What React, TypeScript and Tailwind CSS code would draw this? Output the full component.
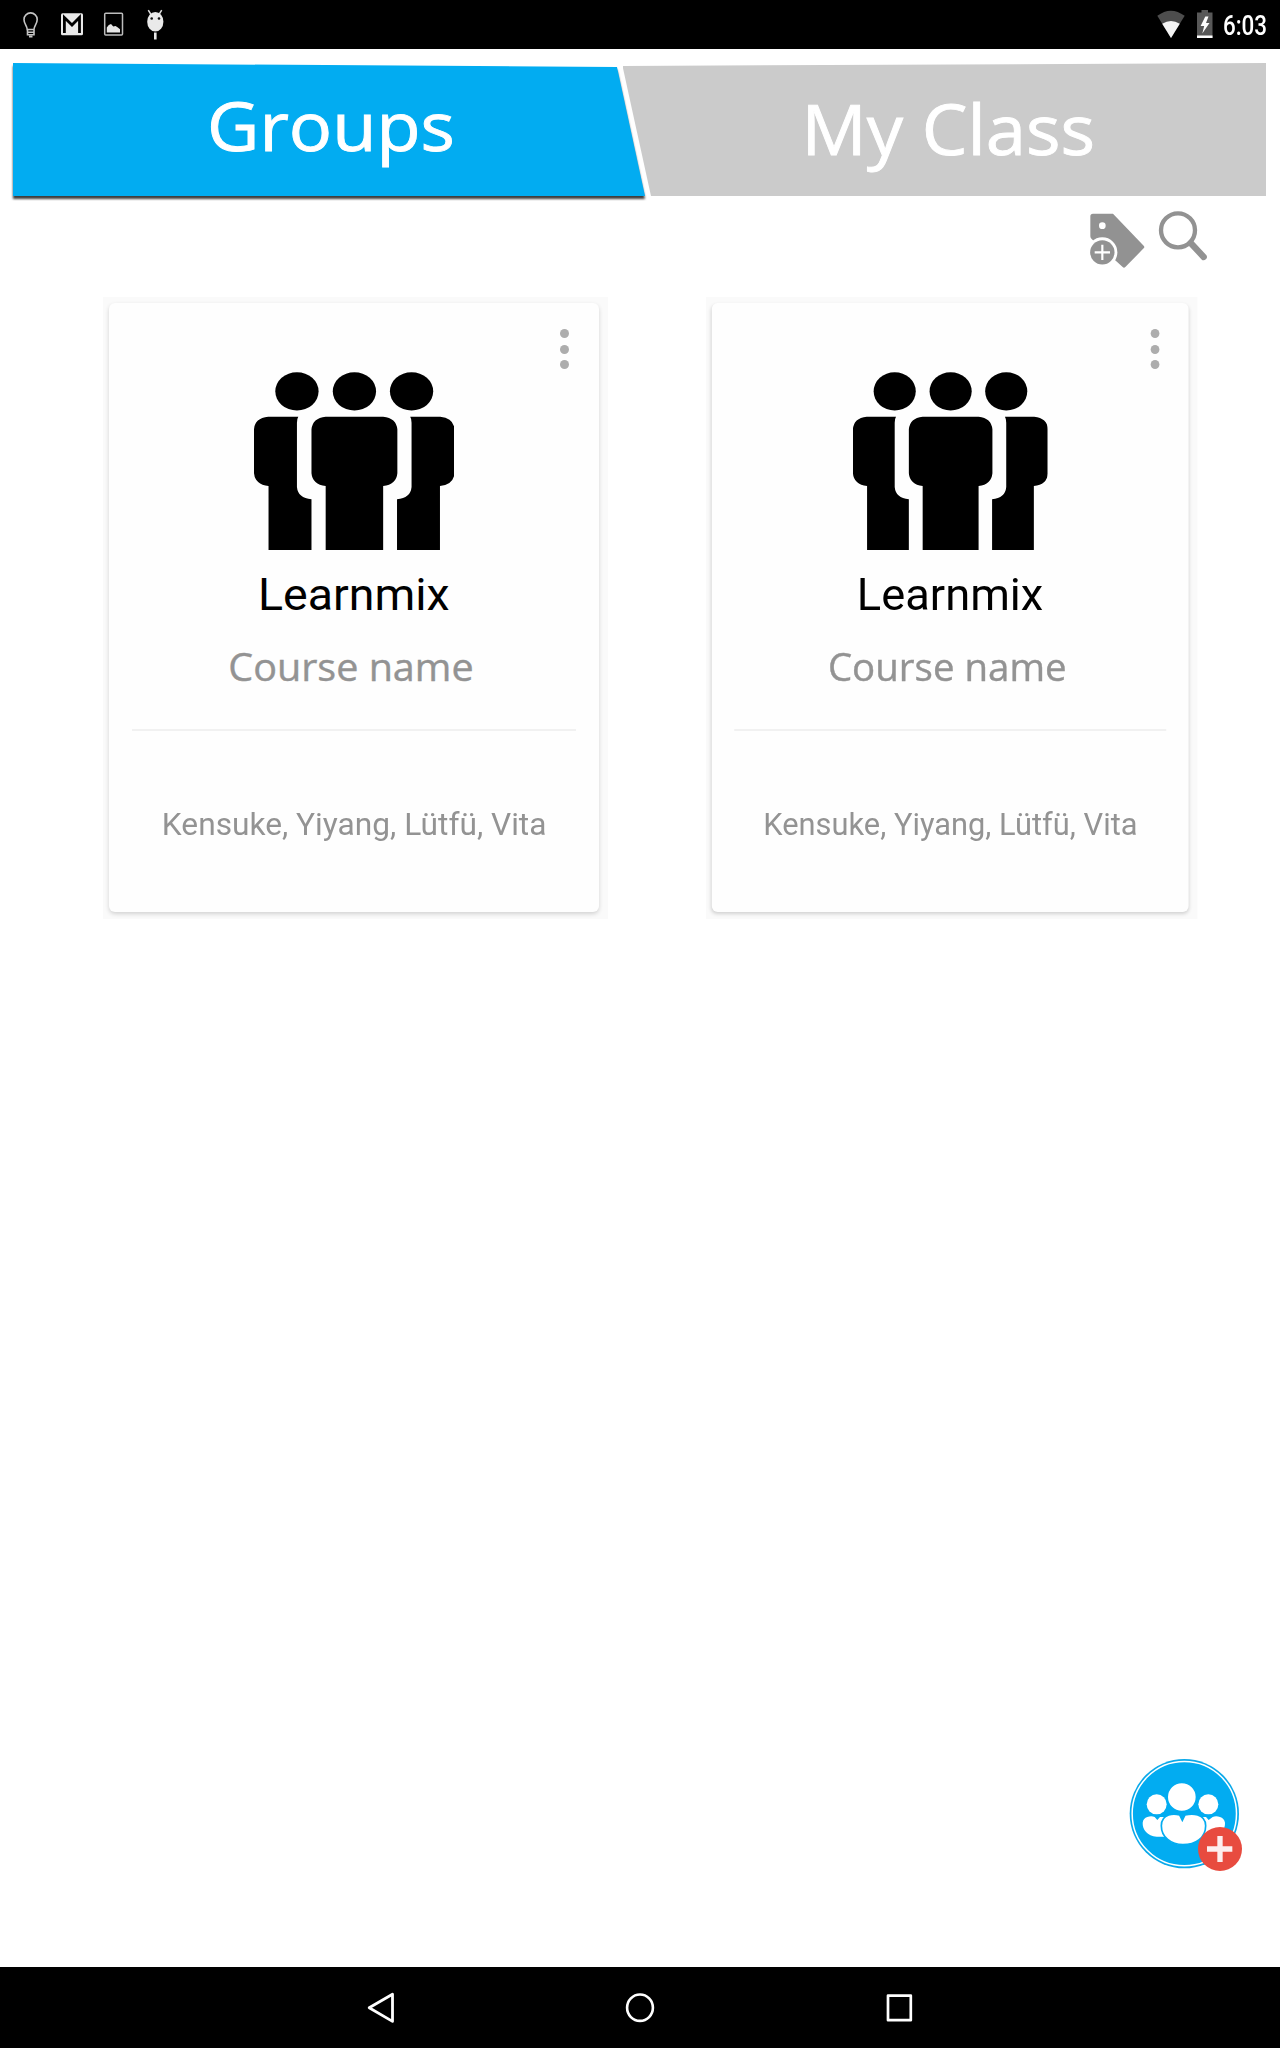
import React from "react";

function StatusBar() {
  return (
    <div className="flex h-[48.5px] shrink-0 items-start justify-between bg-black">
      <div className="flex pt-[8px] pl-[20px]">
        {/* Light bulb */}
        <svg width="21" height="34" viewBox="0 0 21 34" fill="none" stroke="#c4c4c4" strokeWidth="1.6">
          <path d="M7.2 21.5C7 17.5 4 16 4 11.5a6.6 6.6 0 0 1 13.2 0c0 4.500-3 6-3.200 10Z" />
          <path d="M7.500 22v4.800h6.500V22M7.500 24.200h6.500" />
          <path d="M9 28.500h3.500" strokeWidth="2" />
        </svg>
        {/* Mail */}
        <svg className="ml-[19px]" width="24" height="34" viewBox="0 0 24 34">
          <rect x="1" y="5.200" width="22" height="22" rx="1.500" fill="#e9e9e9" />
          <path d="M4.400 25V9.500L12 17l7.500-7.500V25" fill="none" stroke="#000" strokeWidth="2.800" />
        </svg>
        {/* Picture */}
        <svg className="ml-[19px]" width="21" height="34" viewBox="0 0 21 34">
          <rect x="1.700" y="5.200" width="17.800" height="21.800" rx="1" fill="none" stroke="#bdbdbd" strokeWidth="1.500" />
          <path d="M3.800 24.500v-5l2-2.500 2.200-1 2.300 2.600L12.500 18l2 1.200 2.500 2v3.300Z" fill="#e6e6e6" />
        </svg>
        {/* Android head */}
        <svg className="ml-[21px]" width="20" height="34" viewBox="0 0 20 34">
          <path d="M3.300 2.200 6 6.500M16.700 2.200 14 6.500" stroke="#ddd" strokeWidth="1.500" />
          <ellipse cx="10.300" cy="13.800" rx="8.100" ry="9.800" fill="#e9e9e9" />
          <circle cx="6.700" cy="10.500" r="1.300" fill="#111" />
          <circle cx="14" cy="10.500" r="1.300" fill="#111" />
          <path d="M10.300 24.500v7" stroke="#e9e9e9" strokeWidth="2.600" />
        </svg>
      </div>
      <div className="flex pt-[9px] pr-[8px]">
        <svg width="28" height="30" viewBox="0 0 28 30">
          <path d="M.300 6.800Q13.700-3.500 27.700 6.800L14 29Z" fill="#4d4d4d" />
          <path d="M5.200 14.800Q14 9 22.800 14.800L14 29Z" fill="#f4f4f4" />
        </svg>
        <svg className="ml-[12px]" width="16" height="30" viewBox="0 0 16 30">
          <path d="M0 3.500h4.500V1h6.500v2.500h4.500V29H0Z" fill="#585858" />
          <path d="M0 26.500h15.500V29H0Z" fill="#fff" />
          <path d="M8.300 7.500 3.600 17h3.600L5.300 24.500 12.500 14H9l2.500-6.500Z" fill="#fff" />
        </svg>
        <div className="ml-[5px] w-[54px] origin-center scale-x-[0.830] text-center font-[Roboto,sans-serif] text-[27px] leading-[34px] font-medium text-white">
          6:03
        </div>
      </div>
    </div>
  );
}

function Tabs() {
  return (
    <div className="flex shrink-0 pt-[14.500px] pl-[13px] font-['Open_Sans',sans-serif] text-white [-webkit-text-stroke:0.9px_white]">
      <div className="z-10 w-[632px] [filter:drop-shadow(0_3px_1px_#3f3f3f)]">
        <div className="h-[133px] bg-[#02acf1] text-center text-[68px] leading-[124px] [clip-path:polygon(0_0,604px_4px,632px_133px,0_133px)]">
          <span className="inline-block translate-x-[2px] scale-x-[1.060]">Groups</span>
        </div>
      </div>
      <div className="ml-[-22.500px] h-[133px] w-[643.500px] bg-[#cbcbcb] text-center text-[70px] leading-[131px] [clip-path:polygon(0_3px,100%_0,100%_100%,28.500px_100%)]">
        <span className="inline-block translate-x-[4.500px] scale-x-[1.035]">My Class</span>
      </div>
    </div>
  );
}

function Toolbar() {
  return (
    <div className="flex h-[101px] shrink-0 justify-end pt-[17px] pr-[72px]">
      {/* Tag with plus badge */}
      <svg width="56" height="56" viewBox="0 0 168 168">
        <path d="M4 10q0-8 8-8h60l92 96q4 4 0 8l-55 56q-4 4-8 0L8 78q-4-3-4-8Z" fill="#929292" />
        <circle cx="40" cy="38" r="10" fill="#fff" />
        <circle cx="40" cy="118" r="45" fill="#fff" />
        <circle cx="40" cy="118" r="36.500" fill="#929292" />
        <path d="M40 95v46M17 118h46" stroke="#fff" strokeWidth="6.500" />
      </svg>
      <svg className="ml-[13px] overflow-visible" width="50" height="52" viewBox="0 0 150 156" fill="none" stroke="#929292">
        <circle cx="60" cy="52" r="51" strokeWidth="13" />
        <path d="m98 90 39 42" strokeWidth="19" strokeLinecap="round" />
      </svg>
    </div>
  );
}

function PeopleIcon() {
  return (
    <svg className="block" width="200.500" height="178" viewBox="0 0 593 534" preserveAspectRatio="none">
      <ellipse cx="127" cy="58" rx="64" ry="57.500" />
      <ellipse cx="297" cy="58" rx="64" ry="57.500" />
      <ellipse cx="466" cy="58" rx="64" ry="57.500" />
      <path d="M42 134h89q-4 6-4 18v193q3 33 43 37v152H43V342Q3 338 0 304V172q2-34 42-38Z" />
      <path d="M212 134h170q39 4 42 38v132q-3 34-42 38v192H212V342q-39-4-42-38V172q3-34 42-38Z" />
      <path d="M551 134h-89q4 6 4 18v193q-3 33-43 37v152h127V342q40-4 43-38V172q-2-34-42-38Z" />
    </svg>
  );
}

function GroupCard() {
  return (
    <div className="h-[622px] w-[505px] bg-[#fafafa] pt-[6px] pl-[6px]">
      <div className="relative flex h-[609px] w-[490px] flex-col items-center rounded-[6px] bg-[#fefefe] pt-[69px] whitespace-nowrap shadow-[0_2px_4px_rgba(0,0,0,0.160)]">
        <div className="absolute top-[26px] right-[30.500px] flex flex-col gap-[6.500px]">
          <span className="size-[9px] rounded-full bg-[#adadad]" />
          <span className="size-[9px] rounded-full bg-[#adadad]" />
          <span className="size-[9px] rounded-full bg-[#adadad]" />
        </div>
        <PeopleIcon />
        <div className="translate-y-[1px] scale-x-[1.043] font-[Roboto,sans-serif] text-[44.600px] leading-[89.500px] text-black">
          Learnmix
        </div>
        <div className="translate-x-[-3px] scale-x-[1.040] font-['Open_Sans',sans-serif] text-[38px] leading-[52.500px] text-[#939393] [-webkit-text-stroke:0.4px_#939393]">
          Course name
        </div>
        <div className="mt-[37px] h-[2px] w-[444px] shrink-0 bg-[#f1f1f1]" />
        <div className="mt-[64px] scale-x-[1.022] font-[Roboto,sans-serif] text-[31px] leading-[60px] text-[#939393]">
          Kensuke, Yiyang, Lütfü, Vita
        </div>
      </div>
    </div>
  );
}

function AddGroupButton() {
  return (
    <svg className="absolute top-[1740px] left-[1110px]" width="150" height="150" viewBox="0 0 450 450">
      <circle cx="223" cy="221" r="164" fill="#0aa9ea" />
      <circle cx="223" cy="221" r="156.500" fill="#02acf1" stroke="#fff" strokeWidth="4.500" />
      <g fill="#fff">
        <circle cx="140" cy="193" r="30" />
        <circle cx="295" cy="193" r="30" />
        <path d="M112 231q12-5 22 0l8 9 8-9h26v59h-36c-28-2-43-22-42-42q2-14 14-17Z" />
        <path d="M330 231q-12-5-22 0l-12 9-8-9h-20v59h36c28-2 42-22 41-42q-3-14-15-17Z" />
        <circle cx="215.500" cy="171" r="44" stroke="#02acf1" strokeWidth="5" />
        <path
          d="M176 225q15-5 33 0l8 16 8-16q22-5 38 0c16 5 24 16 24 32 0 38-32 57-68 57s-65-23-65-57c0-16 7-27 22-32Z"
          stroke="#02acf1"
          strokeWidth="5"
        />
      </g>
      <circle cx="330" cy="327" r="66" fill="#e84b3f" />
      <path d="M330 288v78M291 327h76" stroke="#fdeeee" strokeWidth="16" />
    </svg>
  );
}

function NavBar() {
  return (
    <div className="mt-auto flex h-[81px] shrink-0 justify-center bg-black">
      <div className="flex w-[259.500px] justify-center pt-[24.500px]">
        <svg width="28" height="32" viewBox="0 0 28 32" fill="none" stroke="#fff" strokeWidth="2.800" strokeLinejoin="round">
          <path d="M25.500 2.200v27.200L2.200 15.800Z" />
        </svg>
      </div>
      <div className="flex w-[259.500px] justify-center pt-[24.500px]">
        <svg width="30" height="32" viewBox="0 0 30 32" fill="none" stroke="#fff" strokeWidth="2.600">
          <ellipse cx="15" cy="15.700" rx="12.900" ry="13.200" />
        </svg>
      </div>
      <div className="flex w-[259.500px] justify-center pt-[24.500px]">
        <svg width="28" height="32" viewBox="0 0 28 32" fill="none" stroke="#fff" strokeWidth="2.700" strokeLinejoin="round">
          <rect x="2" y="3.600" width="22.800" height="24.600" />
        </svg>
      </div>
    </div>
  );
}

export default function App() {
  return (
    <div className="relative flex h-[2048px] w-[1280px] flex-col overflow-hidden bg-white">
      <StatusBar />
      <Tabs />
      <Toolbar />
      <div className="flex pl-[103px]">
        <GroupCard />
        <div className="ml-[97.500px] origin-left scale-x-[0.973]">
          <GroupCard />
        </div>
      </div>
      <AddGroupButton />
      <NavBar />
    </div>
  );
}
